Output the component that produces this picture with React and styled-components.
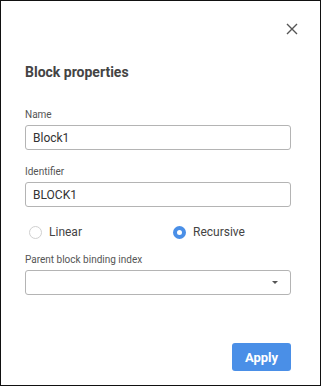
import React from 'react';
import styled, { createGlobalStyle } from 'styled-components';

const GlobalStyle = createGlobalStyle`
    body {
        margin: 0;
        background: #fff;
        font-family: Roboto, "Liberation Sans", sans-serif;
    }
`;

const Frame = styled.div`
    box-sizing: border-box;
    width: 321px;
    height: 386px;
    border: 1px solid #111;
    background: #fff;
    padding: 0 29px 0 24px;
    display: flex;
    flex-direction: column;
`;

const Header = styled.div`
    display: flex;
    justify-content: flex-end;
    padding-top: 22px;
    margin-right: -7px;
`;

const CloseButton = styled.button`
    width: 12px;
    height: 12px;
    padding: 0;
    border: none;
    background: none;
    display: flex;
    cursor: pointer;
`;

const Title = styled.h2`
    margin: 29px 0 0;
    font-size: 14px;
    line-height: 16px;
    font-weight: 700;
    color: #444;
`;

const Field = styled.div`
    display: flex;
    flex-direction: column;
    margin-top: ${p => p.$top}px;
`;

const Label = styled.label`
    font-size: 10px;
    line-height: 12px;
    color: #555;
    margin-bottom: 4px;
`;

const Input = styled.input`
    box-sizing: border-box;
    width: 100%;
    height: 25px;
    border: 1px solid #b4b4b4;
    border-radius: 3px;
    padding: 0 7px;
    font-family: inherit;
    font-size: 12px;
    color: #333;
    outline: none;
`;

const Select = styled.div`
    box-sizing: border-box;
    height: 25px;
    border: 1px solid #b4b4b4;
    border-radius: 3px;
    display: flex;
    align-items: center;
    justify-content: flex-end;
    padding-right: 12px;
`;

const Caret = styled.span`
    width: 0;
    height: 0;
    border-left: 3px solid transparent;
    border-right: 3px solid transparent;
    border-top: 3px solid #555;
`;

const RadioRow = styled.div`
    display: grid;
    grid-template-columns: 144px 1fr;
    padding-left: 4px;
    margin-top: 18px;
`;

const RadioOption = styled.label`
    display: flex;
    align-items: center;
    gap: 7px;
    font-size: 12px;
    line-height: 14px;
    color: #444;
`;

const RadioDot = styled.span`
    box-sizing: border-box;
    width: 13px;
    height: 13px;
    border-radius: 50%;
    border: ${p => (p.$checked ? '4px solid #4a8fe7' : '1px solid #d0d0d0')};
    background: #fff;
`;

const Footer = styled.div`
    margin-top: auto;
    margin-bottom: 14px;
    display: flex;
    justify-content: flex-end;
`;

const ApplyButton = styled.button`
    width: 59px;
    height: 28px;
    border: none;
    border-radius: 3px;
    background: #4a8fe7;
    color: #fff;
    font-family: inherit;
    font-size: 13px;
    font-weight: 700;
    cursor: pointer;
`;

function App() {
    return (
        <>
            <GlobalStyle />
            <Frame>
                <Header>
                    <CloseButton aria-label='close'>
                        <svg width='12' height='12' viewBox='0 0 12 12'>
                            <path d='M1 1L11 11M11 1L1 11' stroke='#555' strokeWidth='1.4' />
                        </svg>
                    </CloseButton>
                </Header>
                <Title>Block properties</Title>
                <Field $top={29}>
                    <Label>Name</Label>
                    <Input defaultValue='Block1' />
                </Field>
                <Field $top={16}>
                    <Label>Identifier</Label>
                    <Input defaultValue='BLOCK1' />
                </Field>
                <RadioRow>
                    <RadioOption>
                        <RadioDot />
                        Linear
                    </RadioOption>
                    <RadioOption>
                        <RadioDot $checked />
                        Recursive
                    </RadioOption>
                </RadioRow>
                <Field $top={15}>
                    <Label>Parent block binding index</Label>
                    <Select>
                        <Caret />
                    </Select>
                </Field>
                <Footer>
                    <ApplyButton>Apply</ApplyButton>
                </Footer>
            </Frame>
        </>
    );
}

export default App;
